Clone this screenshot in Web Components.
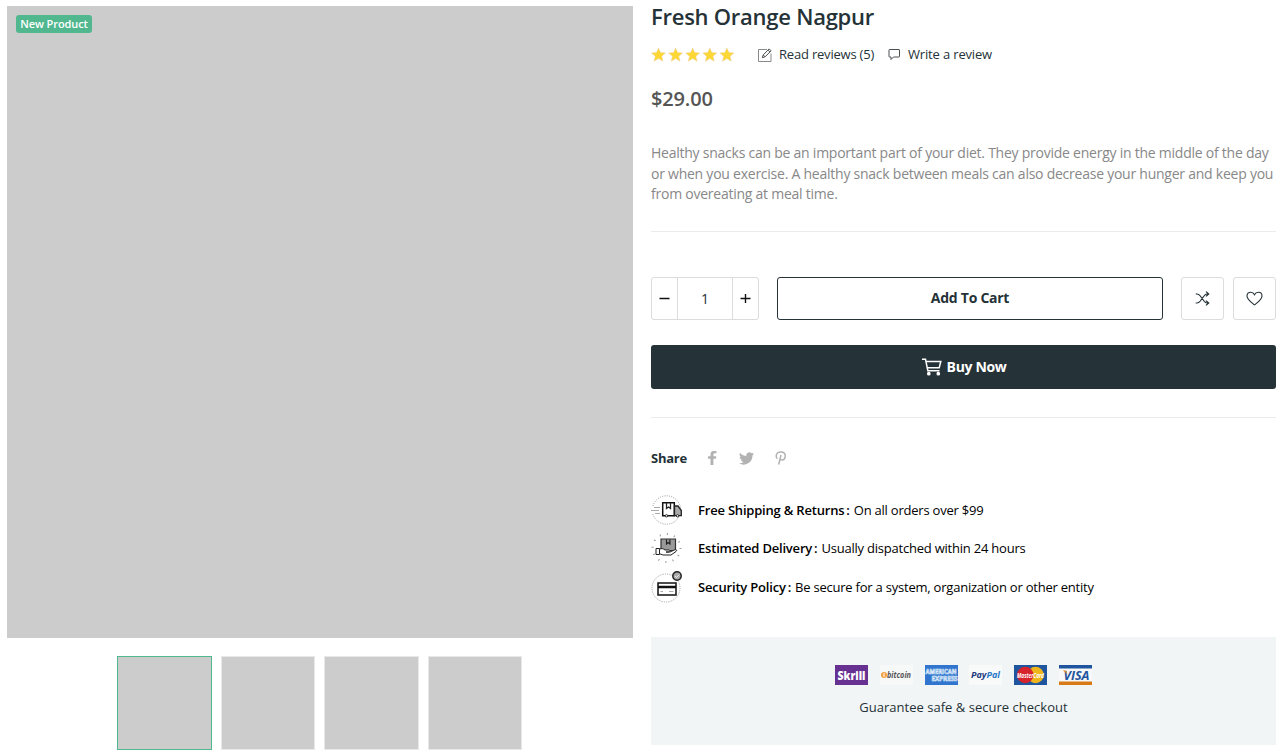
<!DOCTYPE html>
<html lang="en">
<head>
<meta charset="utf-8">
<title>Fresh Orange Nagpur</title>
<style>
html,body{margin:0;background:#fff}
body{font-family:"Open Sans","Noto Sans",sans-serif;font-size:13px;color:#253237;width:1284px;height:754px;overflow:hidden}
</style>
</head>
<body>
<product-page></product-page>
<script>
const define = (name, html) => {
  const t = document.createElement('template');
  t.innerHTML = html;
  customElements.define(name, class extends HTMLElement {
    constructor() {
      super();
      this.attachShadow({ mode: 'open' }).appendChild(t.content.cloneNode(true));
    }
  });
};

define('product-gallery', `
<style>
:host{display:block;width:626px}
.main{height:632px;background:#ccc;box-sizing:border-box;padding:9px}
.badge{display:block;width:76px;height:18px;line-height:18px;border-radius:3px;background:#51b78f;color:#fff;font-weight:600;font-size:11px;letter-spacing:-.1px;text-align:center;white-space:nowrap}
.thumbs{display:flex;gap:9px;margin:18px 0 0 110px}
.thumbs i{box-sizing:border-box;width:94px;height:94px;background:#ccc;border:1px solid #e8e8e8}
.thumbs i:nth-child(odd){width:95px}
.thumbs i:first-child{border-color:#51b78f}
</style>
<div class="main"><span class="badge">New Product</span></div>
<div class="thumbs"><i></i><i></i><i></i><i></i></div>`);

define('star-rating', `
<style>:host{display:flex}svg{display:block}</style>
<svg width="84" height="16" viewBox="0 0 84 16" fill="#fdd835" stroke="#e9cfa0" stroke-width=".5">
<defs><path id="s" d="M7.500 .9l2 4.600 5 .5-3.800 3.300 1.200 4.900-4.400-2.600-4.400 2.600 1.200-4.900L.5 6l5-.5z"/></defs>
<use href="#s"/><use href="#s" x="17.100"/><use href="#s" x="34.200"/><use href="#s" x="51.300"/><use href="#s" x="68.400"/></svg>`);

define('review-bar', `
<style>
:host{display:flex;align-items:center;height:41px;letter-spacing:-.2px}
star-rating{margin-right:23px}
svg{display:block;fill:none;stroke:#4a4f52;stroke-width:1}
.a{width:116px;box-sizing:border-box;padding-left:7px}
.b{margin-left:7px;letter-spacing:-.16px}
span{white-space:nowrap;padding-bottom:2px}
</style>
<star-rating></star-rating>
<svg width="14" height="14" viewBox="0 0 14 14"><path stroke="#888" d="M9 1.500H.5v12h12.500V5.500"/><path d="M4.300 9.700l.9-2.800 6-6 1.900 1.900-6 6zM5.200 6.900l1.900 1.900M10 2.100L11.900 4"/></svg>
<span class="a">Read reviews (5)</span>
<svg width="13" height="13" viewBox="0 0 13 13"><path d="M1.500 1.500h9.500q.5 0 .5 .5v6.500q0 .5-.5 .5H5.500L3 11.500V9H1.500q-.5 0-.5-.5V2q0-.5 .5-.5z"/></svg>
<span class="b">Write a review</span>`);

define('quantity-stepper', `
<style>
:host{display:grid;grid-template-columns:25px 54px 25px;column-gap:1px;background:#dcdcdc;border:1px solid #dcdcdc;border-radius:3px;width:106px;box-sizing:content-box;height:41px;overflow:hidden}
div{background:#fff;display:flex;align-items:center;justify-content:center;font-size:14px}
svg{display:block;stroke:#111;stroke-width:1.400;margin-right:1px}
</style>
<div><svg width="11" height="11"><path d="M.5 5.500h10"/></svg></div>
<div><slot></slot></div>
<div><svg width="11" height="11"><path d="M.5 5.500h10M5.500 1v9"/></svg></div>`);

define('icon-button', `
<style>:host{display:flex;align-items:center;justify-content:center;width:43px;height:43px;box-sizing:border-box;border:1px solid #dcdcdc;border-radius:3px}</style>
<slot></slot>`);

define('purchase-actions', `
<style>
:host{display:block;margin-top:45px}
.row{display:flex}
.add{box-sizing:border-box;width:386px;height:43px;border:1px solid #253237;border-radius:3px;margin:0 18px;display:flex;align-items:center;justify-content:center;font-weight:700;font-size:14px;letter-spacing:-.27px;padding-bottom:2px}
icon-button + icon-button{margin-left:9px}
.buy{box-sizing:border-box;margin-top:25px;height:44px;border-radius:3px;background:#253237;color:#fff;display:flex;align-items:center;justify-content:center;gap:5px;font-weight:700;font-size:14px;letter-spacing:-.35px;padding-left:1px}
.buy span{padding-bottom:1px}
svg{display:block;fill:none}
</style>
<div class="row">
<quantity-stepper>1</quantity-stepper>
<div class="add">Add To Cart</div>
<icon-button><svg width="15" height="15" viewBox="0 0 15 15" stroke="#253237" stroke-width="1.200"><path d="M.7 3h1.300c1.500 0 2.500 1 3.300 2l3.700 5c.8 1.100 1.600 2 3 2h1.500M.7 12h1.300c1.500 0 2.500-1 3.300-2L9 5c.8-1.100 1.600-2 3-2h1.500M11 .6L13.700 3 11 5.400M11 9.600l2.700 2.400-2.700 2.400"/></svg></icon-button>
<icon-button><svg width="17" height="15" viewBox="0 0 17 15" stroke="#253237" stroke-width="1.100"><path d="M8.500 13.900C6 11.800 1 8.500 1 4.900 1 2.700 2.600 1.200 4.600 1.200c1.700 0 3.200 1 3.900 2.500.7-1.500 2.200-2.500 3.900-2.500 2 0 3.600 1.500 3.600 3.700 0 3.600-5 6.900-7.500 9z"/></svg></icon-button>
</div>
<div class="buy"><svg width="20" height="18" viewBox="0 0 20 18" stroke="#fff" stroke-width="1.500"><path d="M0 1.200h3.500l2.300 11.500h11.700M4 3.500h14.800l-1.600 6.200H5.300"/><circle cx="6.800" cy="15.700" r="1.100" fill="#fff"/><circle cx="16.300" cy="15.700" r="1.100" fill="#fff"/></svg><span>Buy Now</span></div>`);

define('share-links', `
<style>
:host{display:flex;align-items:center;height:20px}
b{width:57px;font-weight:700;letter-spacing:-.25px}
svg{display:block;fill:#b2b2b2}
</style>
<b>Share</b>
<svg width="9" height="14" viewBox="0 0 9 14"><path d="M2.500 14V7.800H0V5.300h2.500V3.500C2.500 1.100 3.800 0 5.900 0c1 0 1.900.1 2.600.2v2.100H7c-1.300 0-1.600.6-1.600 1.500v1.500h2.900l-.4 2.500H5.400V14z"/></svg>
<svg style="margin-left:22px" width="15" height="13" viewBox="0 0 24 20"><path d="M24 2.400a10 10 0 0 1-2.800.8A5 5 0 0 0 23.300.5a10 10 0 0 1-3.100 1.200 4.900 4.900 0 0 0-8.400 4.500A14 14 0 0 1 1.700 1a4.900 4.900 0 0 0 1.500 6.600A5 5 0 0 1 1 7v.1a4.900 4.900 0 0 0 3.900 4.800 5 5 0 0 1-2.200.1 4.900 4.900 0 0 0 4.600 3.400A9.900 9.900 0 0 1 0 17.500 14 14 0 0 0 21.500 5a10 10 0 0 0 2.500-2.600z"/></svg>
<svg style="margin-left:21px" width="12" height="14" viewBox="0 0 12 14"><path fill="none" stroke="#b2b2b2" stroke-width="1.500" d="M2.500 7.700C1.700 7.200 1.200 6.200 1.200 5c0-2.400 2-4.100 4.700-4.100 2.600 0 4.300 1.600 4.300 3.800 0 2.500-1.400 4.200-3.300 4.200-1.100 0-1.800-.6-2-1.300M6 4L3.700 13.500"/></svg>`);

define('feature-line', `
<style>
:host{display:flex;align-items:center;height:38px;color:#000;white-space:nowrap;letter-spacing:-.22px}
:host(:last-child){height:40px}
.ic{width:47px;height:32px}
b{font-weight:600;margin-right:4px;letter-spacing:-.2px}
</style>
<span class="ic"><slot name="icon"></slot></span><b><slot name="label"></slot></b><span><slot></slot></span>`);

define('payment-panel', `
<style>
:host{display:block;height:108px;background:#f2f5f6;box-sizing:border-box;padding-top:28px;text-align:center}
.cards{display:flex;justify-content:center;gap:11.800px;height:20px}
svg{display:block;width:33px;height:20px;overflow:visible;font-family:"Open Sans",sans-serif;font-weight:800}
p{margin:12px 0 0;line-height:20px;letter-spacing:.02px}
</style>
<div class="cards">
<svg viewBox="0 0 33 20"><path fill="#673192" d="M0 0h33v20H0z"/><text x="2.500" y="14.500" font-size="12" fill="#fff" textLength="28" lengthAdjust="spacingAndGlyphs">Skrill</text></svg>
<svg viewBox="0 0 33 20"><path fill="#f7f8f8" d="M0 0h33v20H0z"/><circle cx="4" cy="10" r="3" fill="#f39a35"/><path d="M3.200 8.300h1.500v1.400H3.200zm0 1.900h1.700v1.500H3.200z" fill="none" stroke="#fff" stroke-width=".5"/><text x="7" y="12.800" font-size="8" font-weight="700" font-style="italic" fill="#555" textLength="24" lengthAdjust="spacingAndGlyphs">bitcoin</text></svg>
<svg viewBox="0 0 33 20"><path fill="#3175ce" d="M0 0h33v20H0z"/><g fill="#3175ce" stroke="#dce9f8" stroke-width=".7" font-size="6.500" font-weight="700"><text x=".5" y="8.700" textLength="31" lengthAdjust="spacingAndGlyphs">AMERICAN</text><text x="6.500" y="16.300" textLength="26" lengthAdjust="spacingAndGlyphs">EXPRESS</text></g></svg>
<svg viewBox="0 0 33 20"><path fill="#f8f9f9" d="M0 0h33v20H0z"/><text x="2" y="12.800" font-size="8.500" font-weight="700" font-style="italic" fill="#253b80" textLength="29" lengthAdjust="spacingAndGlyphs">Pay<tspan fill="#2978c8">Pal</tspan></text></svg>
<svg viewBox="0 0 33 20"><path fill="#1f549e" d="M0 0h33v20H0z"/><circle cx="21.500" cy="10" r="8.300" fill="#efb51c"/><circle cx="11.200" cy="10" r="8.300" fill="#d6232c"/><text x="3" y="12.500" font-size="6.500" font-weight="700" font-style="italic" fill="#fff" textLength="27" lengthAdjust="spacingAndGlyphs">MasterCard</text></svg>
<svg viewBox="0 0 33 20"><path fill="#f8f8f8" d="M0 0h33v20H0z"/><path fill="#1f549e" d="M0 0h33v3.500H0z"/><path fill="#d87a18" d="M0 16.500h33V20H0z"/><text x="4.500" y="14.500" font-size="12" font-weight="700" font-style="italic" fill="#1f549e" textLength="26" lengthAdjust="spacingAndGlyphs">VISA</text><path fill="#e28a22" d="M3.500 5.500h3.700l1.300 4.500c-.8-1.700-2.500-3.300-5-4.500z"/></svg>
</div>
<p>Guarantee safe &amp; secure checkout</p>`);

define('product-info', `
<style>
:host{display:block;width:625px}
h1{margin:0;height:34px;line-height:32px;font-weight:600;font-size:22px;letter-spacing:-.25px}
.price{height:48px;line-height:48px;font-size:20px;font-weight:600;letter-spacing:-.15px;color:#555}
.desc{margin:20px 0 0;height:89px;box-sizing:border-box;line-height:20.500px;font-size:14px;letter-spacing:-.242px;color:#888;border-bottom:1px solid #ebebeb;white-space:nowrap}
.desc span{display:block}
.rule{height:1px;background:#ebebeb;margin:28px 0 30px}
.features{margin:23px 0 29.500px}
svg{display:block;fill:none;stroke:#222}
</style>
<h1>Fresh Orange Nagpur</h1>
<review-bar></review-bar>
<div class="price">$29.00</div>
<div class="desc"><span>Healthy snacks can be an important part of your diet. They provide energy in the middle of the day</span><span>or when you exercise. A healthy snack between meals can also decrease your hunger and keep you</span><span>from overeating at meal time.</span></div>
<purchase-actions></purchase-actions>
<div class="rule"></div>
<share-links></share-links>
<div class="features">
<feature-line><svg slot="icon" width="32" height="32" viewBox="0 0 32 32"><circle cx="15.500" cy="16" r="14.200" stroke="#999" stroke-dasharray="1 1.300"/><path fill="#fff" stroke="none" d="M0 12h11v8H0z"/><path stroke="#aaa" d="M3 13.500h6M0 16.500h8M4 19.500h5"/><path fill="#fff" stroke="#111" stroke-width="1.500" d="M11.700 8.700h11.600v13H11.700z"/><path fill="#aaa" stroke-width="1.300" d="M23.500 12h3.500l3.300 4.500v5.200h-6.800z"/><path stroke-width="1.300" d="M15.500 9v5.500l2-1.500 2 1.500V9"/><circle cx="15.500" cy="21.800" r="1.200" fill="#fff"/><circle cx="26.500" cy="21.800" r="1.200" fill="#fff"/></svg><span slot="label">Free Shipping &amp; Returns<span style="margin-left:2px">:</span></span>On all orders over $99</feature-line>
<feature-line><svg slot="icon" width="32" height="32" viewBox="0 0 32 32"><circle cx="15.500" cy="16" r="14" stroke="#999" stroke-width="2" stroke-dasharray="1 6.330"/><path fill="#999" stroke="#333" stroke-width="1.200" d="M10 7h14.500v11.500H10z"/><path d="M15.500 7.500V12l1.700-1.500 1.700 1.500V7.500" stroke-width="1.200"/><path fill="#fff" d="M5 16.500h3.500v6H5z"/><path fill="#fff" d="M8.500 17.200c2-1 4-.6 5.500.8h4c1.300 0 1.300 2-.2 2H15h4l5-2.300c1.500-.5 2.300.8 1 1.800L20 23H12l-3.500-1.300z"/></svg><span slot="label">Estimated Delivery<span style="margin-left:2px">:</span></span>Usually dispatched within 24 hours</feature-line>
<feature-line><svg slot="icon" width="32" height="32" viewBox="0 0 32 32"><circle cx="15" cy="17" r="14" stroke="#999" stroke-dasharray="1 1.300"/><circle cx="26" cy="5" r="4.200" fill="#aaa" stroke-width="1.500"/><path stroke="#eee" d="M24 5l1.500 1.500L28 3.800"/><path fill="#fff" stroke="#111" stroke-width="1.500" d="M7 12h18v12H7z"/><path stroke="#111" stroke-width="2.500" d="M7 16h18"/><path stroke="#aaa" d="M9.500 20.500h2.500M18 20.500h4.500"/></svg><span slot="label">Security Policy<span style="margin-left:2px">:</span></span>Be secure for a system, organization or other entity</feature-line>
</div>
<payment-panel></payment-panel>`);

define('product-page', `
<style>
:host{display:flex;align-items:flex-start;gap:18px;padding:0 8px 0 7px}
product-gallery{margin-top:6px}
</style>
<product-gallery></product-gallery><product-info></product-info>`);
</script>
</body>
</html>
